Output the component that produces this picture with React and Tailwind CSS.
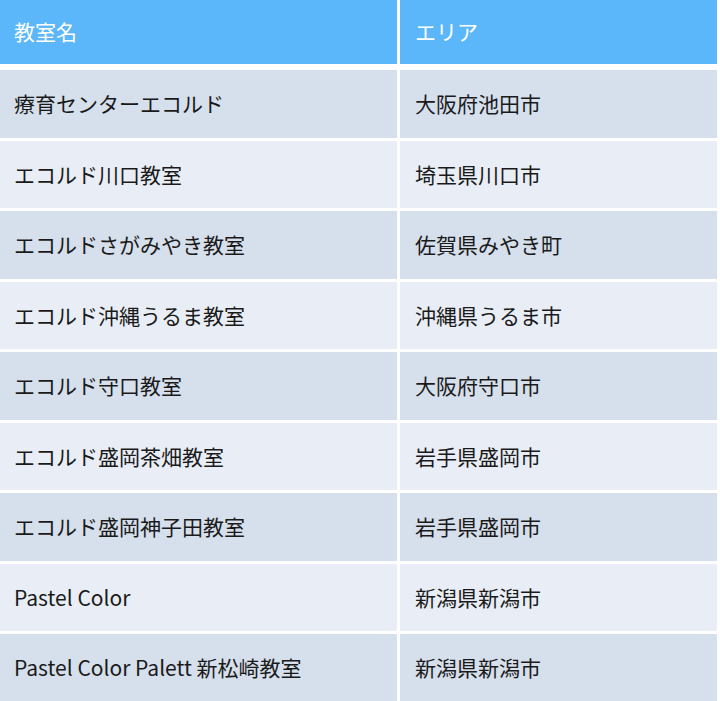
const rows = [
  ["療育センターエコルド", "大阪府池田市"],
  ["エコルド川口教室", "埼玉県川口市"],
  ["エコルドさがみやき教室", "佐賀県みやき町"],
  ["エコルド沖縄うるま教室", "沖縄県うるま市"],
  ["エコルド守口教室", "大阪府守口市"],
  ["エコルド盛岡茶畑教室", "岩手県盛岡市"],
  ["エコルド盛岡神子田教室", "岩手県盛岡市"],
  ["Pastel Color", "新潟県新潟市"],
  ["Pastel Color Palett 新松崎教室", "新潟県新潟市"],
]

export default function App() {
  return (
    <div
      className="w-[720px] h-[701px] overflow-hidden bg-white pr-[3px] text-[21px] text-[#1a1a1a]"
      style={{ fontFamily: '"Noto Sans CJK JP", "Noto Sans", sans-serif' }}
    >
      <div className="grid grid-cols-[397px_1fr] gap-x-[3px] h-[64px] text-white">
        <div className="bg-[#5bb7f9] flex items-center pl-[14px]">教室名</div>
        <div className="bg-[#5bb7f9] flex items-center pl-[15px]">エリア</div>
      </div>
      <div className="mt-[6px] flex flex-col gap-[3px]">
        {rows.map(([name, area], i) => {
          const bg = i % 2 === 0 ? "bg-[#d6dfec]" : "bg-[#e9eef6]"
          return (
            <div key={i} className="grid grid-cols-[397px_1fr] gap-x-[3px] h-[67.5px] shrink-0">
              <div className={`${bg} flex items-center pl-[14px]`}>{name}</div>
              <div className={`${bg} flex items-center pl-[15px]`}>{area}</div>
            </div>
          )
        })}
      </div>
    </div>
  )
}
